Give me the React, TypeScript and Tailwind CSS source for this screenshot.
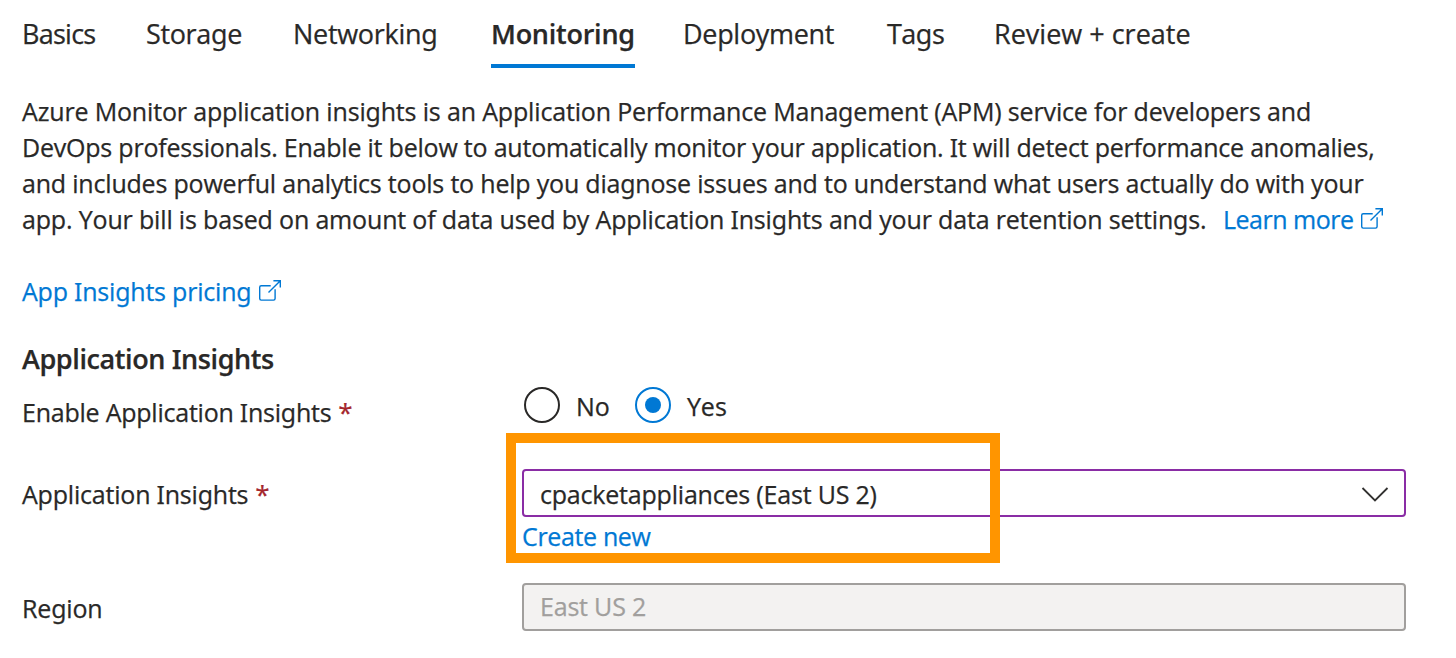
const tabs = [
  { label: "Basics", className: "w-[124px] tracking-[-0.75px]" },
  { label: "Storage", className: "w-[147px] tracking-[-0.35px]" },
  { label: "Networking", className: "w-[198px] tracking-[-0.3px]" },
  { label: "Monitoring", active: true, className: "mr-[48px] w-[144px] tracking-[-0.25px]" },
  { label: "Deployment", className: "w-[204px] tracking-[-0.3px]" },
  { label: "Tags", className: "w-[107px] tracking-[-0.5px]" },
  { label: "Review + create", className: "tracking-[0px]" },
];

function ExternalLinkIcon({ className = "" }: { className?: string }) {
  return (
    <svg
      className={`inline-block ${className}`}
      width="24"
      height="24"
      viewBox="0 0 24 24"
      fill="none"
      stroke="currentColor"
      strokeWidth="1.4"
      aria-hidden="true"
    >
      <path d="M12.7 7.7H3.2a1.5 1.5 0 0 0-1.5 1.5v11.4a1.5 1.5 0 0 0 1.5 1.5h12.4a1.5 1.5 0 0 0 1.5-1.5v-9.3" />
      <path d="M15.4 2.7h6.9v6.9M22.3 2.7 10.5 14.5" />
    </svg>
  );
}

function Radio({ label, checked = false }: { label: string; checked?: boolean }) {
  return (
    <div className="flex">
      <span
        className={`flex size-9 items-center justify-center rounded-full border-2 ${
          checked ? "border-[#0078d4]" : "border-[#292827]"
        }`}
      >
        {checked && <span className="size-4 rounded-full bg-[#0078d4]" />}
      </span>
      <span className="mt-[1px] ml-4">{label}</span>
    </div>
  );
}

function Required() {
  return <span className="ml-[7px] pt-[5px] text-[26px] leading-none font-medium text-[#a4262c]">*</span>;
}

export default function App() {
  return (
    <main className="relative h-[658px] w-[1456px] overflow-hidden bg-white pl-[22px] font-['Open_Sans','Noto_Sans',sans-serif] text-[25px] leading-9 whitespace-nowrap text-[#292827] [-webkit-text-stroke:0.25px] [font-feature-settings:'ss01']">
      <nav className="flex h-[68px] pt-4 text-[27px]">
        {tabs.map((tab) => (
          <div
            key={tab.label}
            className={`shrink-0 ${tab.className} ${
              tab.active ? "border-b-4 border-[#0078d4] font-semibold" : ""
            }`}
          >
            {tab.label}
          </div>
        ))}
      </nav>

      <div className="mt-[25px]">
        <div className="tracking-[-0.16px]">
          Azure Monitor application insights is an Application Performance Management (APM) service for developers and
        </div>
        <div className="tracking-[-0.215px]">
          DevOps professionals. Enable it below to automatically monitor your application. It will detect performance anomalies,
        </div>
        <div className="tracking-[-0.195px]">
          and includes powerful analytics tools to help you diagnose issues and to understand what users actually do with your
        </div>
        <div className="flex tracking-[-0.165px]">
          <span className="w-[1201px]">
            app. Your bill is based on amount of data used by Application Insights and your data retention settings.
          </span>
          <a className="flex text-[#0078d4]">
            <span className="w-[137px] tracking-[-0.5px]">Learn more</span>
            <ExternalLinkIcon className="mt-[5px]" />
          </a>
        </div>
      </div>

      <a className="mt-9 flex text-[#0078d4]">
        <span className="w-[236px] tracking-[-0.2px]">App Insights pricing</span>
        <ExternalLinkIcon className="mt-[5px]" />
      </a>

      <h2 className="mt-8 text-[27px] leading-9 font-semibold tracking-[-0.4px]">Application Insights</h2>

      <div className="mt-[10px] grid grid-cols-[500px_884px]">
        <div className="flex h-[82px] pt-[7px] tracking-[-0.23px]">
          Enable Application Insights
          <Required />
        </div>
        <div className="flex gap-[25px] pl-[2px]">
          <Radio label="No" />
          <Radio label="Yes" checked />
        </div>

        <div className="flex h-[114px] pt-[7px] tracking-[-0.2px]">
          Application Insights
          <Required />
        </div>
        <div>
          <div className="flex h-12 items-center justify-between rounded-[4px] border-2 border-[#8a2da5] bg-white pt-[2px] pr-[15px] pl-4 tracking-[-0.2px]">
            <span>cpacketappliances (East US 2)</span>
            <svg width="28" height="16" viewBox="0 0 28 16" fill="none" stroke="#323130" strokeWidth="1.8" aria-hidden="true">
              <path d="M1.5 2 14 14.5 26.5 2" />
            </svg>
          </div>
          <a className="mt-[1px] block tracking-[-0.35px] text-[#0078d4]">Create new</a>
        </div>

        <div className="pt-[7px] tracking-[-0.15px]">Region</div>
        <div className="flex h-12 items-center rounded-[4px] border-2 border-[#a19f9d] bg-[#f3f2f1] px-4 pb-[2px] tracking-[-0.2px] text-[#a19f9d]">
          East US 2
        </div>
      </div>

      <div className="absolute top-[433px] left-[506px] h-[130px] w-[494px] border-[10px] border-[#ff9500]" />
    </main>
  );
}
